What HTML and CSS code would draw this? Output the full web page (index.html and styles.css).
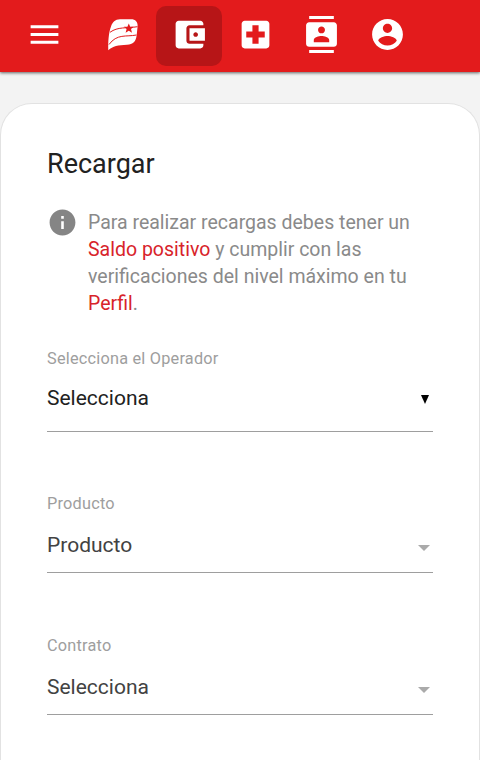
FILE: index.html
```html
<!DOCTYPE html>
<html lang="es">
<head>
<meta charset="utf-8">
<meta name="viewport" content="width=device-width">
<title>Recargar</title>
<link rel="stylesheet" href="styles.css">
</head>
<body>
<header class="bar">
  <a class="menu"><svg class="icon" viewBox="0 0 24 24"><path d="M3 18h18v-2H3v2zm0-5h18v-2H3v2zm0-7v2h18V6H3z"/></svg></a>
  <nav class="tabs">
    <a class="tab"><svg class="logo" viewBox="0 0 32 34"><path d="M1.300 32.300C1 24 1.600 15 4 8.500C5.700 4 8 1.500 13 1.300H24C28.500 1.300 31 4 30.600 8.500L29.700 17C29 23.500 26 26.500 20 26.800C11 27.200 6 28 1.300 32.300Z"/><path class="stripe" d="M3 14.300C11 8.500 19 10.500 30.500 8.700M2 26.500C10 15.500 19 19 29.500 17"/><path class="star" d="M21.800 5.500l1.400 3.200 3.600.1-2.800 2.300 1 3.600-3.200-2-3.200 2 1-3.600-2.800-2.300 3.600-.1z"/></svg></a>
    <a class="tab active"><svg class="icon" viewBox="0 0 24 24"><path d="M21 18v1c0 1.100-.9 2-2 2H5c-1.110 0-2-.9-2-2V5c0-1.100.89-2 2-2h14c1.100 0 2 .9 2 2v1h-9c-1.110 0-2 .9-2 2v8c0 1.100.89 2 2 2h9zm-9-2h10V8H12v8zm4-2.500c-.83 0-1.500-.67-1.500-1.500s.67-1.500 1.500-1.500 1.500.67 1.500 1.500-.67 1.500-1.500 1.500z"/></svg></a>
    <a class="tab"><svg class="icon" viewBox="0 0 24 24"><path d="M19 3H5c-1.100 0-1.990.9-1.990 2L3 19c0 1.100.9 2 2 2h14c1.100 0 2-.9 2-2V5c0-1.100-.9-2-2-2zm-1 11h-4v4h-4v-4H6v-4h4V6h4v4h4v4z"/></svg></a>
    <a class="tab"><svg class="icon" viewBox="0 0 24 24"><path d="M20 0H4v2h16V0zM4 24h16v-2H4v2zM20 4H4c-1.100 0-2 .9-2 2v12c0 1.100.9 2 2 2h16c1.100 0 2-.9 2-2V6c0-1.100-.9-2-2-2zm-8 2.750c1.240 0 2.250 1.010 2.250 2.250s-1.010 2.250-2.250 2.250S9.750 10.240 9.750 9 10.760 6.750 12 6.750zM17 17H7v-1.500c0-1.670 3.330-2.500 5-2.500s5 .83 5 2.500V17z"/></svg></a>
    <a class="tab"><svg class="icon" viewBox="0 0 24 24"><path d="M12 2C6.480 2 2 6.480 2 12s4.480 10 10 10 10-4.480 10-10S17.520 2 12 2zm0 3c1.660 0 3 1.340 3 3s-1.340 3-3 3-3-1.340-3-3 1.340-3 3-3zm0 14.200c-2.500 0-4.710-1.280-6-3.220.03-1.990 4-3.080 6-3.080 1.990 0 5.970 1.090 6 3.080-1.290 1.940-3.500 3.220-6 3.220z"/></svg></a>
  </nav>
</header>
<main class="card">
  <h1 class="title">Recargar</h1>
  <div class="note">
    <svg class="info" viewBox="0 0 24 24"><path d="M12 2C6.480 2 2 6.480 2 12s4.480 10 10 10 10-4.480 10-10S17.520 2 12 2zm1 15h-2v-6h2v6zm0-8h-2V7h2v2z"/></svg>
    <p class="note-text">Para realizar recargas debes tener un <a class="link">Saldo positivo</a> y cumplir con las verificaciones del nivel máximo en tu <a class="link">Perfil</a>.</p>
  </div>
  <div class="field operator">
    <span class="label">Selecciona el Operador</span>
    <div class="select"><span>Selecciona</span><svg class="caret" viewBox="0 0 8 9"><path d="M0 0h8L4 9z"/></svg></div>
  </div>
  <div class="field">
    <span class="label">Producto</span>
    <div class="select"><span>Producto</span><svg class="arrow" viewBox="0 0 12 6"><path d="M0 0h12L6 6z"/></svg></div>
  </div>
  <div class="field last">
    <span class="label">Contrato</span>
    <div class="select"><span>Selecciona</span><svg class="arrow" viewBox="0 0 12 6"><path d="M0 0h12L6 6z"/></svg></div>
  </div>
</main>
</body>
</html>
```
FILE: styles.css
```css
* { box-sizing: border-box; }
body {
  margin: 0;
  height: 760px;
  overflow: hidden;
  background: #f3f3f3;
  font-family: Roboto, sans-serif;
  color: #212121;
}
.bar {
  display: flex;
  height: 72px;
  padding: 6px 0 0 26px;
  background: #e31b1c;
  box-shadow: 0 1px 3px rgba(0, 0, 0, .6);
}
.menu, .tab {
  display: flex;
  align-items: center;
  height: 60px;
  padding-bottom: 3px;
}
.menu { width: 64px; padding-bottom: 4px; }
.tabs { display: flex; }
.tab {
  justify-content: center;
  width: 66px;
  border-radius: 10px;
}
.active { background: #b71517; }
.icon { width: 37px; height: 37px; fill: #fff; }
.logo { width: 32px; height: 34px; fill: #fff; }
.stripe { fill: none; stroke: #e31b1c; stroke-width: 1; }
.star { fill: #e31b1c; }
.card {
  height: 657px;
  margin-top: 31px;
  padding: 42px 46px 0;
  border: 1px solid #e2e2e2;
  border-bottom: 0;
  border-radius: 32px 32px 0 0;
  background: #fff;
}
.title {
  margin: 0;
  font-size: 27px;
  line-height: 36px;
  font-weight: 400;
}
.note {
  display: flex;
  gap: 10px;
  margin-top: 27px;
  color: #8a8a8a;
}
.info { flex: none; width: 31px; height: 31px; margin-top: -2px; fill: #858585; }
.note-text {
  margin: 0;
  font-size: 19.5px;
  line-height: 27px;
}
.link { color: #d8232a; }
.field {
  height: 142px;
  color: #424242;
}
.operator {
  height: 145px;
  margin-top: 32px;
  color: #212121;
}
.last { height: 80px; }
.label {
  display: block;
  height: 20px;
  font-size: 16.3px;
  line-height: 20px;
  letter-spacing: .22px;
  color: #9e9e9e;
}
.select {
  display: flex;
  align-items: center;
  justify-content: space-between;
  height: 59px;
  padding: 3px 3px 0 0;
  border-bottom: 1px solid #9e9e9e;
  font-size: 21px;
}
.operator .select { height: 63px; padding: 0 4px 4px 0; }
.caret { width: 8px; height: 9px; margin-top: 3px; fill: #000; }
.arrow { width: 12px; height: 6px; margin-top: 6px; fill: #aaa; }
```
